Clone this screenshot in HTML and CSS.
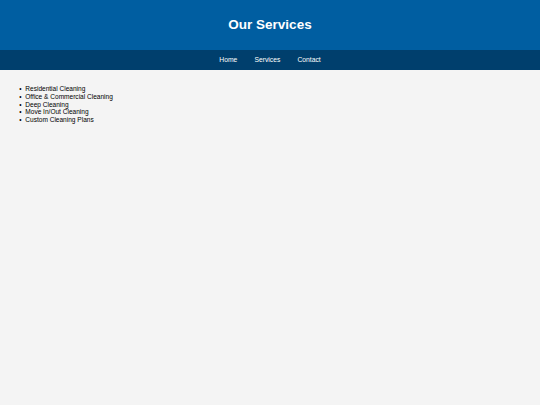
FILE: index.html
```html
<!DOCTYPE html>
<html lang="en">
<head>
<meta charset="utf-8">
<title>Our Services</title>
<link rel="stylesheet" href="styles.css">
</head>
<body>
<header class="site-header">
  <h1 class="title">Our Services</h1>
</header>
<nav class="site-nav">
  <a href="#">Home</a>
  <a href="#">Services</a>
  <a href="#">Contact</a>
</nav>
<main class="content">
  <ul class="services">
    <li>Residential Cleaning</li>
    <li>Office &amp; Commercial Cleaning</li>
    <li>Deep Cleaning</li>
    <li>Move In/Out Cleaning</li>
    <li>Custom Cleaning Plans</li>
  </ul>
</main>
</body>
</html>
```
FILE: styles.css
```css
html, body {
  margin: 0;
  padding: 0;
}
body {
  background: #f4f4f4;
  font-family: "Liberation Sans", Arial, sans-serif;
  color: #000;
}
.site-header {
  background: #005ea1;
  color: #fff;
  text-align: center;
  padding: 8.4px 0;
}
.title {
  font-size: 13.5px;
  margin: 9px 0;
  line-height: 15.5px;
}
.site-nav {
  background: #003f6d;
  text-align: center;
  padding: 6px 0;
  font-size: 6.75px;
  line-height: 7.8px;
}
.site-nav a {
  color: #fff;
  text-decoration: none;
  margin: 0 7.6px;
}
.content {
  padding: 8.4px;
}
.services {
  margin: 6.75px 0;
  padding-left: 16.9px;
  font-size: 6.55px;
  line-height: 7.75px;
}
.services li::marker {
  content: "\2022\00a0\00a0";
}
```
